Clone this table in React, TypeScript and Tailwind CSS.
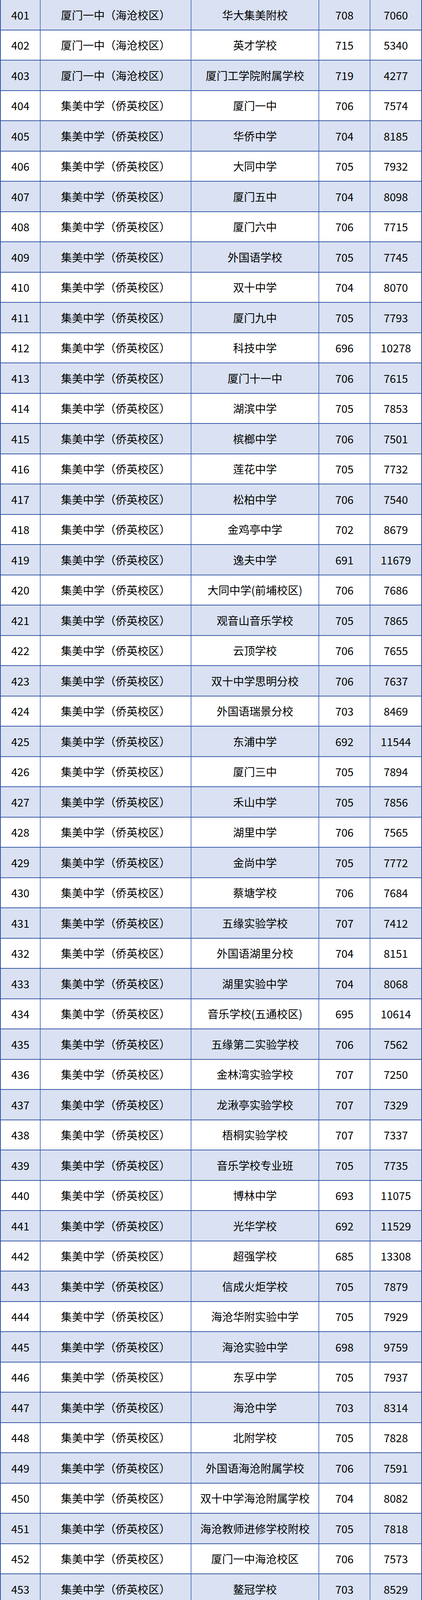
const JM = '集美中学（侨英校区）'
const YZ = '厦门一中（海沧校区）'
const SZ = '厦门十中'

// [录取学校, 毕业学校, 分数, 排名]
const rows: [string, string, number, number][] = [
  [YZ, '华大集美附校', 708, 7060],
  [YZ, '英才学校', 715, 5340],
  [YZ, '厦门工学院附属学校', 719, 4277],
  [JM, '厦门一中', 706, 7574],
  [JM, '华侨中学', 704, 8185],
  [JM, '大同中学', 705, 7932],
  [JM, '厦门五中', 704, 8098],
  [JM, '厦门六中', 706, 7715],
  [JM, '外国语学校', 705, 7745],
  [JM, '双十中学', 704, 8070],
  [JM, '厦门九中', 705, 7793],
  [JM, '科技中学', 696, 10278],
  [JM, '厦门十一中', 706, 7615],
  [JM, '湖滨中学', 705, 7853],
  [JM, '槟榔中学', 706, 7501],
  [JM, '莲花中学', 705, 7732],
  [JM, '松柏中学', 706, 7540],
  [JM, '金鸡亭中学', 702, 8679],
  [JM, '逸夫中学', 691, 11679],
  [JM, '大同中学(前埔校区)', 706, 7686],
  [JM, '观音山音乐学校', 705, 7865],
  [JM, '云顶学校', 706, 7655],
  [JM, '双十中学思明分校', 706, 7637],
  [JM, '外国语瑞景分校', 703, 8469],
  [JM, '东浦中学', 692, 11544],
  [JM, '厦门三中', 705, 7894],
  [JM, '禾山中学', 705, 7856],
  [JM, '湖里中学', 706, 7565],
  [JM, '金尚中学', 705, 7772],
  [JM, '蔡塘学校', 706, 7684],
  [JM, '五缘实验学校', 707, 7412],
  [JM, '外国语湖里分校', 704, 8151],
  [JM, '湖里实验中学', 704, 8068],
  [JM, '音乐学校(五通校区)', 695, 10614],
  [JM, '五缘第二实验学校', 706, 7562],
  [JM, '金林湾实验学校', 707, 7250],
  [JM, '龙湫亭实验学校', 707, 7329],
  [JM, '梧桐实验学校', 707, 7337],
  [JM, '音乐学校专业班', 705, 7735],
  [JM, '博林中学', 693, 11075],
  [JM, '光华学校', 692, 11529],
  [JM, '超强学校', 685, 13308],
  [JM, '信成火炬学校', 705, 7879],
  [JM, '海沧华附实验中学', 705, 7929],
  [JM, '海沧实验中学', 698, 9759],
  [JM, '东孚中学', 705, 7937],
  [JM, '海沧中学', 703, 8314],
  [JM, '北附学校', 705, 7828],
  [JM, '外国语海沧附属学校', 706, 7591],
  [JM, '双十中学海沧附属学校', 704, 8082],
  [JM, '海沧教师进修学校附校', 705, 7818],
  [JM, '厦门一中海沧校区', 706, 7573],
  [JM, '鳌冠学校', 703, 8529],
  [JM, '马銮湾实验学校', 703, 8388],
  [JM, '集美中学', 705, 7771],
  [JM, '厦门十中', 702, 8777],
  [JM, '杏南中学', 703, 8417],
  [JM, '乐安中学', 704, 8251],
  [JM, '后溪中学', 702, 8616],
  [JM, '灌口中学', 700, 9131],
  [JM, '上塘中学', 703, 8493],
  [JM, '滨水学校', 705, 7749],
  [JM, '杏东中学', 703, 8426],
  [JM, '西亭学校', 704, 8124],
  [JM, '集美实验学校', 705, 7826],
  [JM, '诚毅中学', 706, 7678],
  [JM, '蔡林学校', 704, 8195],
  [JM, '杏南中学（后溪校区）', 702, 8682],
  [JM, '外国语集美校区', 707, 7225],
  [JM, '华大集美附校', 702, 8578],
  [JM, '英才学校', 697, 9951],
  [SZ, '海沧华附实验中学', 664, 18500],
  [SZ, '海沧实验中学', 665, 18301],
  [SZ, '东孚中学', 664, 18441],
  [SZ, '海沧中学', 665, 18254],
  [SZ, '北附学校', 662, 18881],
  [SZ, '外国语海沧附属学校', 656, 20240],
  [SZ, '双十中学海沧附属学校', 662, 18848],
  [SZ, '海沧教师进修学校附校', 664, 18614],
  [SZ, '厦门一中海沧校区', 661, 19147],
  [SZ, '鳌冠学校', 661, 19177],
  [SZ, '马銮湾实验学校', 669, 17400],
  [SZ, '集美中学', 666, 17967],
  [SZ, '厦门十中', 665, 18226],
  [SZ, '杏南中学', 661, 19160],
  [SZ, '乐安中学', 666, 18146],
  [SZ, '后溪中学', 664, 18456],
  [SZ, '灌口中学', 651, 21175],
  [SZ, '上塘中学', 665, 18224],
  [SZ, '滨水学校', 667, 17737],
  [SZ, '杏东中学', 667, 17876],
  [SZ, '西亭学校', 663, 18682],
  [SZ, '集美实验学校', 667, 17850],
  [SZ, '诚毅中学', 668, 17509],
  [SZ, '蔡林学校', 668, 17637],
  [SZ, '杏南中学（后溪校区）', 663, 18815],
  [SZ, '外国语集美校区', 668, 17554],
  [SZ, '华大集美附校', 665, 18214],
  [SZ, '英才学校', 667, 17851],
  [SZ, '厦门工学院附属学校', 669, 17319],
]

export default function App() {
  return (
    <div
      className="flex flex-col w-[1080px] h-[7750px] overflow-hidden bg-white text-[28px] leading-none text-black border-l-2 border-[#2f54a0]"
      style={{ fontFamily: '"Microsoft YaHei", "Noto Sans CJK SC", "Noto Sans", sans-serif' }}
    >
      {rows.map(([school, from, score, rank], i) => (
        <div
          key={i}
          className={`grid flex-1 min-h-0 overflow-hidden grid-cols-[102px_386px_327px_131px_1fr] border-b-2 border-[#3a5ba8] ${
            i % 2 === 0 ? 'bg-[#d9e1f2]' : 'bg-white'
          }`}
        >
          <div className="flex items-center justify-center border-r-2 border-[#5f7dc2]">{401 + i}</div>
          <div className="relative flex items-center justify-center border-r-2 border-[#5f7dc2]">
            {school === SZ && (
              <span className="absolute left-0 top-0 w-0 h-0 border-t-[5px] border-r-[5px] border-t-[#1f8a3c] border-r-transparent" />
            )}
            {school}
          </div>
          <div className="flex items-center justify-center border-r-2 border-[#5f7dc2] whitespace-nowrap">{from}</div>
          <div className="flex items-center justify-center border-r-2 border-[#5f7dc2]">{score}</div>
          <div className="flex items-center justify-center border-r-2 border-[#2f54a0]">{rank}</div>
        </div>
      ))}
    </div>
  )
}
